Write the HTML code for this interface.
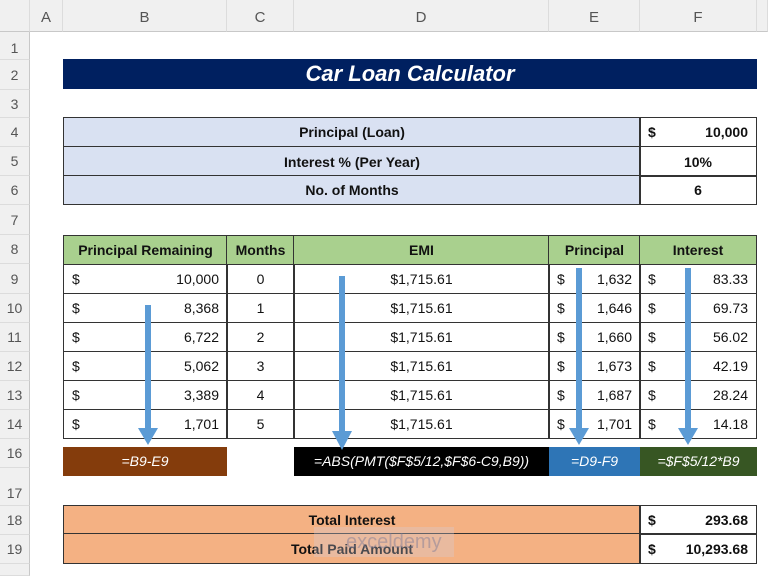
<!DOCTYPE html>
<html><head><meta charset="utf-8"><style>
*{margin:0;padding:0;box-sizing:border-box}
body{width:768px;height:576px;overflow:hidden;background:#fff;font-family:"Liberation Sans",sans-serif;position:relative}
.a{position:absolute}
.ch{position:absolute;top:0;height:32px;background:#f0f0f0;border-bottom:1px solid #c8c8c8;border-right:1px solid #dcdcdc;color:#555;font-size:15px;text-align:center;line-height:36px}
.rh{position:absolute;left:0;width:30px;background:#f0f0f0;border-right:1px solid #c8c8c8;border-bottom:1px solid #dcdcdc;color:#555;font-size:14px;text-align:center}
.c{position:absolute;border:1.5px solid #333;font-size:14px;color:#111;display:flex;align-items:center;justify-content:center}
.b{font-weight:bold}
.d{justify-content:space-between;padding:0 8px}
</style></head><body>
<div class="ch" style="left:0;width:30px"></div>
<div class="ch" style="left:30px;width:33px">A</div>
<div class="ch" style="left:63px;width:164px">B</div>
<div class="ch" style="left:227px;width:67px">C</div>
<div class="ch" style="left:294px;width:255px">D</div>
<div class="ch" style="left:549px;width:91px">E</div>
<div class="ch" style="left:640px;width:117px">F</div>
<div class="ch" style="left:757px;width:11px"></div>
<div class="rh" style="top:32px;height:28px;line-height:32px">1</div>
<div class="rh" style="top:60px;height:30px;line-height:30px">2</div>
<div class="rh" style="top:90px;height:28px;line-height:28px">3</div>
<div class="rh" style="top:118px;height:29px;line-height:29px">4</div>
<div class="rh" style="top:147px;height:29px;line-height:29px">5</div>
<div class="rh" style="top:176px;height:29px;line-height:29px">6</div>
<div class="rh" style="top:205px;height:30px;line-height:30px">7</div>
<div class="rh" style="top:235px;height:29px;line-height:29px">8</div>
<div class="rh" style="top:264px;height:30px;line-height:30px">9</div>
<div class="rh" style="top:294px;height:29px;line-height:29px">10</div>
<div class="rh" style="top:323px;height:29px;line-height:29px">11</div>
<div class="rh" style="top:352px;height:29px;line-height:29px">12</div>
<div class="rh" style="top:381px;height:29px;line-height:29px">13</div>
<div class="rh" style="top:410px;height:29px;line-height:29px">14</div>
<div class="rh" style="top:439px;height:29px;line-height:29px">16</div>
<div class="rh" style="top:468px;height:38px;line-height:50px">17</div>
<div class="rh" style="top:506px;height:29px;line-height:29px">18</div>
<div class="rh" style="top:535px;height:29px;line-height:29px">19</div>
<div class="rh" style="top:564px;height:12px"></div>
<div class="a" style="left:63px;top:59px;width:694px;height:30px;background:#002060;color:#fff;font-size:22px;font-weight:bold;font-style:italic;text-align:center;line-height:30px">Car Loan Calculator</div>

<div class="c b" style="left:63px;top:117px;width:578px;height:30px;background:#d9e1f2">Principal (Loan)</div>
<div class="c b d" style="left:639px;top:117px;width:118px;height:30px"><span>$</span><span>10,000</span></div>
<div class="c b" style="left:63px;top:146px;width:578px;height:31px;background:#d9e1f2">Interest % (Per Year)</div>
<div class="c b" style="left:639px;top:146px;width:118px;height:31px">10%</div>
<div class="c b" style="left:63px;top:175px;width:578px;height:30px;background:#d9e1f2">No. of Months</div>
<div class="c b" style="left:639px;top:175px;width:118px;height:30px">6</div>

<div class="c b" style="left:63px;top:235px;width:165px;height:30px;background:#a9d08e">Principal Remaining</div>
<div class="c b" style="left:226px;top:235px;width:69px;height:30px;background:#a9d08e">Months</div>
<div class="c b" style="left:293px;top:235px;width:257px;height:30px;background:#a9d08e">EMI</div>
<div class="c b" style="left:548px;top:235px;width:93px;height:30px;background:#a9d08e">Principal</div>
<div class="c b" style="left:639px;top:235px;width:118px;height:30px;background:#a9d08e">Interest</div>

<div id="rows"></div>
<script>
var d=[["10,000","0","1,632","83.33"],["8,368","1","1,646","69.73"],["6,722","2","1,660","56.02"],["5,062","3","1,673","42.19"],["3,389","4","1,687","28.24"],["1,701","5","1,701","14.18"]];
var h="";
d.forEach(function(r,i){var t=264+i*29;
h+='<div class="c d" style="left:63px;top:'+t+'px;width:165px;height:30px"><span>$</span><span>'+r[0]+'</span></div>';
h+='<div class="c" style="left:226px;top:'+t+'px;width:69px;height:30px">'+r[1]+'</div>';
h+='<div class="c" style="left:293px;top:'+t+'px;width:257px;height:30px">$1,715.61</div>';
h+='<div class="c d" style="left:548px;top:'+t+'px;width:93px;height:30px"><span>$</span><span>'+r[2]+'</span></div>';
h+='<div class="c d" style="left:639px;top:'+t+'px;width:118px;height:30px"><span>$</span><span>'+r[3]+'</span></div>';});
document.getElementById("rows").outerHTML=h;
</script>

<div class="a" style="left:63px;top:447px;width:164px;height:29px;background:#843c0c;color:#fff;font-size:14px;font-style:italic;text-align:center;line-height:29px">=B9-E9</div>
<div class="a" style="left:294px;top:447px;width:255px;height:29px;background:#000;color:#fff;font-size:14px;font-style:italic;text-align:center;line-height:29px">=ABS(PMT($F$5/12,$F$6-C9,B9))</div>
<div class="a" style="left:549px;top:447px;width:91px;height:29px;background:#2e75b6;color:#fff;font-size:14px;font-style:italic;text-align:center;line-height:29px">=D9-F9</div>
<div class="a" style="left:640px;top:447px;width:117px;height:29px;background:#375623;color:#fff;font-size:14px;font-style:italic;text-align:center;line-height:29px">=$F$5/12*B9</div>

<svg class="a" style="left:0;top:0" width="768" height="576">
<g fill="#5b9bd5">
<rect x="145" y="305" width="6" height="125"/><polygon points="138,428 158,428 148,445"/>
<rect x="339" y="276" width="6" height="157"/><polygon points="332,431 352,431 342,450"/>
<rect x="576" y="268" width="6" height="162"/><polygon points="569,428 589,428 579,445"/>
<rect x="685" y="268" width="6" height="162"/><polygon points="678,428 698,428 688,445"/>
</g></svg>

<div class="c b" style="left:63px;top:505px;width:578px;height:30px;background:#f4b183">Total Interest</div>
<div class="c b d" style="left:639px;top:505px;width:118px;height:30px"><span>$</span><span>293.68</span></div>
<div class="c b" style="left:63px;top:533px;width:578px;height:31px;background:#f4b183">Total Paid Amount</div>
<div class="c b d" style="left:639px;top:533px;width:118px;height:31px"><span>$</span><span>10,293.68</span></div>
<div class="a" style="left:314px;top:527px;width:140px;height:30px;background:rgba(210,210,225,0.3);color:rgba(120,120,150,0.45);font-size:20px;line-height:30px;padding-left:32px">exceldemy</div>
</body></html>
